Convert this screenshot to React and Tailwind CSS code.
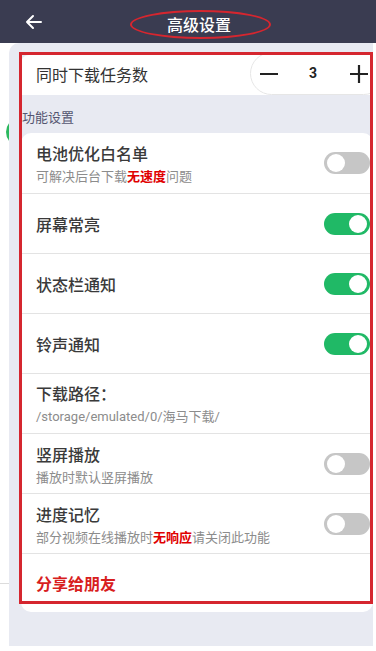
import React from "react";

const font = { fontFamily: '"Noto Sans CJK SC", "Noto Sans", sans-serif' };

function Toggle({ on }) {
  return (
    <div
      className={
        "w-[46px] h-[22px] rounded-full flex items-center shrink-0 " +
        (on ? "bg-[#20b966] justify-end pr-[3px]" : "bg-[#c6c6c6] justify-start pl-[3px]")
      }
    >
      <div className="w-[18px] h-[18px] rounded-full bg-white" />
    </div>
  );
}

function Row({ title, sub, toggle, on }) {
  return (
    <div className="h-[60px] flex items-center justify-between pl-[15px] pr-[3px] border-t border-[#e3e3e3] first:border-t-0">
      <div className="flex flex-col">
        <div className="text-[16px] leading-[24px] font-medium text-[#3a3a3a]">{title}</div>
        {sub && <div className="text-[13px] leading-[18px] mt-[2px] text-[#8c8c8c]">{sub}</div>}
      </div>
      {toggle && <Toggle on={on} />}
    </div>
  );
}

export default function App() {
  return (
    <div className="w-[376px] h-[651px] relative overflow-hidden bg-white flex flex-col" style={font}>
      <header className="h-[43px] bg-[#3a3c51] flex items-center shrink-0 relative">
        <div className="w-[64px] pl-[24px] flex items-center">
          <svg width="20" height="20" viewBox="0 0 20 20" fill="none" stroke="white" strokeWidth="2" strokeLinecap="round" strokeLinejoin="round">
            <path d="M17 10H3M9 4L3 10L9 16" />
          </svg>
        </div>
        <div className="ml-[103px] mt-[5px] text-white text-[16px] font-medium leading-none">高级设置</div>
        <div className="absolute left-[130px] top-[10px] w-[141px] h-[29px] rounded-[50%] border-[2.5px] border-[#d5262f]" />
      </header>
      <div className="flex flex-1">
        <div className="w-[9px] relative overflow-hidden flex flex-col">
          <div className="w-[28px] h-[28px] rounded-full bg-[#2bb85e] ml-[6px] mt-[75px]" />
          <div className="mt-[437px] h-px bg-[#dcdcdc] w-full" />
        </div>
        <div className="w-[364px] h-[603px] bg-[#e8eaf2] rounded-tl-[10px] pt-[12px] pl-[12px] overflow-hidden flex flex-col">
          <div className="h-[40px] bg-white rounded-tl-[8px] flex items-center justify-between pl-[15px]">
            <div className="text-[16px] text-[#333] -mt-[3px]">同时下载任务数</div>
            <div className="h-[43px] w-[135px] -mr-[12px] -mt-[3px] rounded-full border border-[#e6e6e6] bg-white flex items-center pl-[8px] shrink-0">
              <svg width="20" height="20" viewBox="0 0 20 20" stroke="#222" strokeWidth="2.2">
                <path d="M1 10H19" />
              </svg>
              <span className="ml-[30px] text-[14px] font-bold text-[#222]" style={{ fontFamily: "Roboto, sans-serif" }}>3</span>
              <svg className="ml-[32px]" width="20" height="20" viewBox="0 0 20 20" stroke="#222" strokeWidth="2.2">
                <path d="M1 10H19M10 1V19" />
              </svg>
            </div>
          </div>
          <div className="h-[38px] flex items-end pb-[7px] text-[13px] leading-[18px] text-[#555671] pl-px">功能设置</div>
          <div className="bg-white rounded-[10px] flex flex-col">
            <Row
              title="电池优化白名单"
              sub={<>可解决后台下载<span className="text-[#e00000] font-bold">无速度</span>问题</>}
              toggle
              on={false}
            />
            <Row title="屏幕常亮" toggle on />
            <Row title="状态栏通知" toggle on />
            <Row title="铃声通知" toggle on />
            <Row
              title="下载路径："
              sub={<span style={{ fontFamily: 'Roboto, "Noto Sans CJK SC", sans-serif' }}>/storage/emulated/0/海马下载/</span>}
            />
            <Row title="竖屏播放" sub="播放时默认竖屏播放" toggle on={false} />
            <Row
              title="进度记忆"
              sub={<>部分视频在线播放时<span className="text-[#e00000] font-bold">无响应</span>请关闭此功能</>}
              toggle
              on={false}
            />
            <div className="h-[59px] flex items-center pl-[15px] border-t border-[#e3e3e3] text-[16px] font-bold text-[#d81e1e]">
              分享给朋友
            </div>
          </div>
        </div>
        <div className="w-[3px]" />
      </div>
      <div className="absolute left-[19px] top-[52px] w-[354px] h-[552px] border-[3px] border-[#d5262f] pointer-events-none" />
    </div>
  );
}
